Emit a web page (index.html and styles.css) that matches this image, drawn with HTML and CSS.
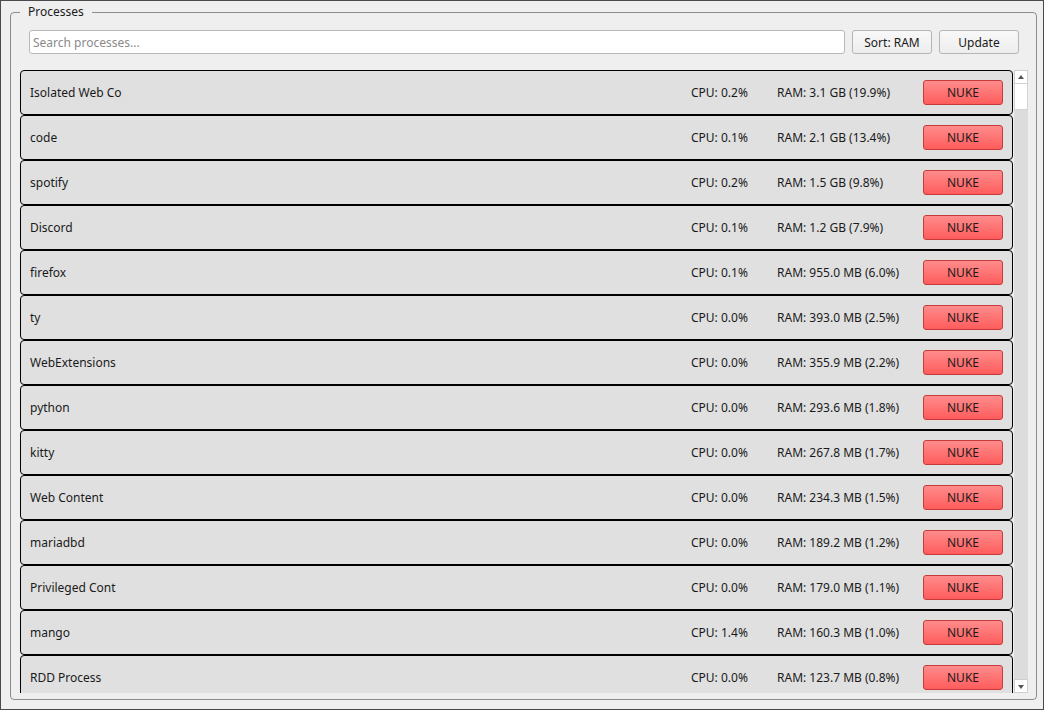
FILE: index.html
```html
<!DOCTYPE html>
<html lang="en">
<head>
  <meta charset="UTF-8" />
  <title>Processes</title>
  <link rel="stylesheet" href="styles.css">
</head>
<body>

  <fieldset class="group">
    <legend>Processes</legend>

    <div class="toolbar">
      <input class="search" type="text" placeholder="Search processes...">
      <button class="btn">Sort: RAM</button>
      <button class="btn">Update</button>
    </div>

    <div class="list-wrap">
      <div class="list">
        <div class="row"><span class="name">Isolated Web Co</span><span class="cpu">CPU: 0.2%</span><span class="ram">RAM: 3.1 GB (19.9%)</span><button class="nuke">NUKE</button></div>
        <div class="row"><span class="name">code</span><span class="cpu">CPU: 0.1%</span><span class="ram">RAM: 2.1 GB (13.4%)</span><button class="nuke">NUKE</button></div>
        <div class="row"><span class="name">spotify</span><span class="cpu">CPU: 0.2%</span><span class="ram">RAM: 1.5 GB (9.8%)</span><button class="nuke">NUKE</button></div>
        <div class="row"><span class="name">Discord</span><span class="cpu">CPU: 0.1%</span><span class="ram">RAM: 1.2 GB (7.9%)</span><button class="nuke">NUKE</button></div>
        <div class="row"><span class="name">firefox</span><span class="cpu">CPU: 0.1%</span><span class="ram">RAM: 955.0 MB (6.0%)</span><button class="nuke">NUKE</button></div>
        <div class="row"><span class="name">ty</span><span class="cpu">CPU: 0.0%</span><span class="ram">RAM: 393.0 MB (2.5%)</span><button class="nuke">NUKE</button></div>
        <div class="row"><span class="name">WebExtensions</span><span class="cpu">CPU: 0.0%</span><span class="ram">RAM: 355.9 MB (2.2%)</span><button class="nuke">NUKE</button></div>
        <div class="row"><span class="name">python</span><span class="cpu">CPU: 0.0%</span><span class="ram">RAM: 293.6 MB (1.8%)</span><button class="nuke">NUKE</button></div>
        <div class="row"><span class="name">kitty</span><span class="cpu">CPU: 0.0%</span><span class="ram">RAM: 267.8 MB (1.7%)</span><button class="nuke">NUKE</button></div>
        <div class="row"><span class="name">Web Content</span><span class="cpu">CPU: 0.0%</span><span class="ram">RAM: 234.3 MB (1.5%)</span><button class="nuke">NUKE</button></div>
        <div class="row"><span class="name">mariadbd</span><span class="cpu">CPU: 0.0%</span><span class="ram">RAM: 189.2 MB (1.2%)</span><button class="nuke">NUKE</button></div>
        <div class="row"><span class="name">Privileged Cont</span><span class="cpu">CPU: 0.0%</span><span class="ram">RAM: 179.0 MB (1.1%)</span><button class="nuke">NUKE</button></div>
        <div class="row"><span class="name">mango</span><span class="cpu">CPU: 1.4%</span><span class="ram">RAM: 160.3 MB (1.0%)</span><button class="nuke">NUKE</button></div>
        <div class="row"><span class="name">RDD Process</span><span class="cpu">CPU: 0.0%</span><span class="ram">RAM: 123.7 MB (0.8%)</span><button class="nuke">NUKE</button></div>
      </div>

      <!-- barra de rolagem -->
      <div class="scrollbar">
        <div class="arrow up"></div>
        <div class="handle"></div>
        <div class="track"></div>
        <div class="arrow down"></div>
      </div>
    </div>
  </fieldset>

</body>
</html>
```

FILE: styles.css
```css
* {
  box-sizing: border-box;
}

html, body {
  margin: 0;
  padding: 0;
}

body {
  width: 1044px;
  height: 710px;
  background: #efefef;
  border: 1px solid #4a4a4a;
  font-family: 'Noto Sans', sans-serif;
  font-size: 12px;
  color: #1a1a1a;
  overflow: hidden;
}

/* Grupo */
.group {
  margin: 2px 6px 0 9px;
  height: 697px;
  border: 1px solid #8c8c8c;
  border-radius: 4px;
  padding: 9px 8px 4px 9px;
  min-width: 0;
}

.group legend {
  padding: 0 8px;
  line-height: 18px;
  color: #1a1a1a;
}

/* Barra de busca */
.toolbar {
  display: flex;
  gap: 7px;
  margin: 0 9px 0 9px;
  height: 24px;
}

.search {
  flex: 1;
  height: 24px;
  border: 1px solid #b8b8b8;
  border-radius: 3px;
  background: #fff;
  font-family: inherit;
  font-size: 12px;
  padding: 0 3px;
  color: #1a1a1a;
}

.search::placeholder {
  color: #8a8a8a;
}

.btn {
  width: 80px;
  height: 24px;
  border: 1px solid #b5b5b5;
  border-radius: 3px;
  background: linear-gradient(#f8f8f8, #ededed);
  font-family: inherit;
  font-size: 12px;
  color: #1a1a1a;
  padding: 0;
}

/* Lista */
.list-wrap {
  display: flex;
  margin-top: 16px;
  height: 623px;
}

.list {
  flex: 1;
  overflow: hidden;
}

.row {
  display: flex;
  align-items: center;
  height: 45px;
  background: #e0e0e0;
  border: 1px solid #000;
  border-radius: 4px;
  padding: 0 9px;
}

.name {
  flex: 1;
}

.cpu {
  width: 86px;
}

.ram {
  width: 146px;
}

.nuke {
  width: 80px;
  height: 25px;
  border: 1px solid #c73a3a;
  border-radius: 3px;
  background: linear-gradient(#ff8c8c, #ff5c5c);
  font-family: inherit;
  font-size: 12px;
  color: #1a1a1a;
  padding: 0;
}

/* Barra de rolagem */
.scrollbar {
  width: 14px;
  margin-left: 1px;
  display: flex;
  flex-direction: column;
  background: #dcdcdc;
}

.arrow {
  height: 14px;
  background: #fff;
  border: 1px solid #cfcfcf;
  position: relative;
}

.arrow::after {
  content: '';
  position: absolute;
  left: 3px;
  top: 4px;
  border-left: 3.5px solid transparent;
  border-right: 3.5px solid transparent;
}

.arrow.up::after {
  border-bottom: 4px solid #555;
}

.arrow.down::after {
  top: 5px;
  border-top: 4px solid #555;
}

.handle {
  height: 26px;
  background: #fff;
  border: 1px solid #d4d4d4;
  border-top: none;
}

.track {
  flex: 1;
}
```
